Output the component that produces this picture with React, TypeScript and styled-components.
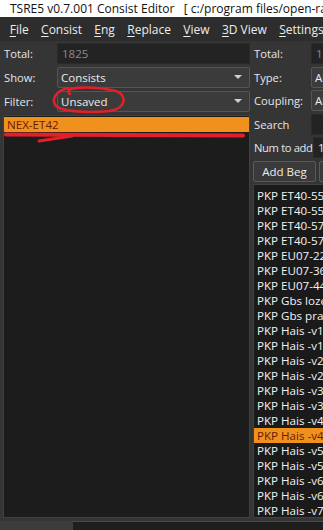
import React from 'react';
import styled, { createGlobalStyle } from 'styled-components';

const GlobalStyle = createGlobalStyle`
  html, body {
    margin: 0;
    padding: 0;
    background: #353535;
    overflow: hidden;
  }
  body {
    font-family: "Open Sans", "Noto Sans", sans-serif;
    font-size: 11.5px;
    color: #e6e6e6;
  }
`;

const Window = styled.div`
  position: relative;
  width: 323px;
  height: 530px;
  overflow: hidden;
  display: flex;
  flex-direction: column;
`;

const TitleBar = styled.div`
  height: 17px;
  background: #ffffff;
  display: flex;
  align-items: center;
  gap: 7px;
  padding-left: 3px;
  color: #111;
  font-size: 12px;
  white-space: pre;
  overflow: hidden;
`;

const MenuBar = styled.div`
  height: 24px;
  background: #2d2d2d;
  display: flex;
  align-items: center;
  padding-left: 3.5px;
  white-space: nowrap;
  font-size: 12px;
`;

const MenuItem = styled.span`
  padding: 0 6.2px;
  color: #ececec;
  u {
    text-decoration-thickness: 1px;
    text-underline-offset: 2px;
  }
`;

const Main = styled.div`
  flex: 1;
  display: flex;
  padding-top: 2px;
  min-height: 0;
`;

const LeftPanel = styled.div`
  width: 247px;
  margin-left: 3px;
  display: flex;
  flex-direction: column;
  gap: 3px;
  flex-shrink: 0;
`;

const RightPanel = styled.div`
  margin-left: 3px;
  width: 200px;
  flex-shrink: 0;
  display: flex;
  flex-direction: column;
  gap: 2.5px;
`;

const FieldRow = styled.div<{ $labelWidth: number }>`
  display: grid;
  grid-template-columns: ${p => p.$labelWidth}px 1fr;
  align-items: center;
  height: 21px;
`;

const Label = styled.span<{ $tight?: boolean }>`
  padding-left: 1px;
  font-size: 11.2px;
  letter-spacing: ${p => (p.$tight ? '-0.35px' : 'normal')};
  color: #e6e6e6;
  white-space: nowrap;
`;

const TextBox = styled.div<{ $muted?: boolean }>`
  height: 21px;
  box-sizing: border-box;
  background: #232323;
  border: 1px solid #2a2a2a;
  display: flex;
  align-items: center;
  padding-left: 4px;
  color: ${p => (p.$muted ? '#8a8a8a' : '#e6e6e6')};
`;

const Combo = styled.div`
  position: relative;
  height: 21px;
  box-sizing: border-box;
  background: #3b3b3b;
  border: 1px solid #555;
  border-radius: 2px;
  display: flex;
  align-items: center;
  padding-left: 3px;
  color: #ececec;
`;

const Arrow = styled.span`
  position: absolute;
  right: 7px;
  top: 7px;
  width: 0;
  height: 0;
  border-left: 4px solid transparent;
  border-right: 4px solid transparent;
  border-top: 4px solid #cfcfcf;
`;

const ListBox = styled.div`
  flex: 1;
  box-sizing: border-box;
  background: #1c1c1c;
  border: 1px solid #404040;
  padding: 1px 0;
  overflow: hidden;
  margin-bottom: 12px;
`;

const ListItem = styled.div<{ $selected?: boolean }>`
  height: 15px;
  line-height: 15px;
  padding-left: 3px;
  white-space: nowrap;
  font-size: 11.6px;
  background: ${p => (p.$selected ? '#f0911e' : 'transparent')};
  color: ${p => (p.$selected ? '#6a1a05' : '#f2f2f2')};
`;

const ButtonRow = styled.div`
  display: flex;
  gap: 3px;
  height: 21px;
`;

const Button = styled.div`
  width: 63px;
  flex-shrink: 0;
  box-sizing: border-box;
  background: #3a3a3a;
  border: 1px solid #5a5a5a;
  border-radius: 2px;
  display: flex;
  align-items: center;
  justify-content: center;
  color: #ececec;
`;

const RightList = styled(ListBox)`
  padding-top: 3px;
  background: #1a1a1a;
`;

const BottomStrip = styled.div`
  position: absolute;
  left: 0;
  bottom: 0;
  width: 323px;
  height: 9px;
  display: flex;
`;

const BottomTab = styled.div`
  width: 73px;
  background: #3c3c3c;
`;

const BottomDock = styled.div`
  flex: 1;
  background: #1e1e1e;
  border-top: 1px solid #4a4a4a;
`;

const Overlay = styled.svg`
  position: absolute;
  left: 0;
  top: 0;
  pointer-events: none;
`;

const AppIcon = () => (
  <svg width="13" height="12" viewBox="0 0 13 12">
    <rect x="0.5" y="0.5" width="12" height="11" fill="#d8dde0" stroke="#9aa3a8" />
    <rect x="1" y="1" width="12" height="2" fill="#7d8a90" />
    <rect x="2" y="4" width="4" height="6" fill="#4f8a8f" />
  </svg>
);

const rightItems = [
  'PKP ET40-55a', 'PKP ET40-55b', 'PKP ET40-57a', 'PKP ET40-57b',
  'PKP EU07-22', 'PKP EU07-36', 'PKP EU07-44', 'PKP Gbs lozenka',
  'PKP Gbs prazna', 'PKP Hais -v1a', 'PKP Hais -v1b', 'PKP Hais -v2a',
  'PKP Hais -v2b', 'PKP Hais -v3a', 'PKP Hais -v3b', 'PKP Hais -v4a',
  'PKP Hais -v4b', 'PKP Hais -v5a', 'PKP Hais -v5b', 'PKP Hais -v6a',
  'PKP Hais -v6b', 'PKP Hais -v7a',
];

const menus = ['File', 'Consist', 'Eng', 'Replace', 'View', '3D View', 'Settings'];

export default function App() {
  return (
    <>
      <GlobalStyle />
      <Window>
        <TitleBar>
          <AppIcon />
          <span>TSRE5 v0.7.001 Consist Editor   [ c:/program files/open-rails/routes ]</span>
        </TitleBar>
        <MenuBar>
          {menus.map(m => (
            <MenuItem key={m}>
              <u>{m[0]}</u>
              {m.slice(1)}
            </MenuItem>
          ))}
        </MenuBar>
        <Main>
          <LeftPanel>
            <FieldRow $labelWidth={54}>
              <Label>Total:</Label>
              <TextBox $muted>1825</TextBox>
            </FieldRow>
            <FieldRow $labelWidth={54}>
              <Label>Show:</Label>
              <Combo>Consists<Arrow /></Combo>
            </FieldRow>
            <FieldRow $labelWidth={54}>
              <Label>Filter:</Label>
              <Combo>Unsaved<Arrow /></Combo>
            </FieldRow>
            <ListBox>
              <ListItem $selected>NEX-ET42</ListItem>
            </ListBox>
          </LeftPanel>
          <RightPanel>
            <FieldRow $labelWidth={58}>
              <Label>Total:</Label>
              <TextBox $muted>1825</TextBox>
            </FieldRow>
            <FieldRow $labelWidth={58}>
              <Label>Type:</Label>
              <Combo>All<Arrow /></Combo>
            </FieldRow>
            <FieldRow $labelWidth={58}>
              <Label>Coupling:</Label>
              <Combo>All<Arrow /></Combo>
            </FieldRow>
            <FieldRow $labelWidth={58}>
              <Label>Search</Label>
              <TextBox />
            </FieldRow>
            <FieldRow $labelWidth={60}>
              <Label $tight>Num to add</Label>
              <TextBox>1</TextBox>
            </FieldRow>
            <ButtonRow>
              <Button>Add Beg</Button>
              <Button>Add End</Button>
            </ButtonRow>
            <RightList>
              {rightItems.map((t, i) => (
                <ListItem key={t} $selected={i === 16}>{t}</ListItem>
              ))}
            </RightList>
          </RightPanel>
        </Main>
        <BottomStrip>
          <BottomTab />
          <BottomDock />
        </BottomStrip>
        <Overlay width="323" height="530" viewBox="0 0 323 530">
          <path
            d="M70 94 C60 86, 95 86, 116 91 C127 95, 127 108, 110 111 C90 113, 62 112, 56 106 C51 100, 55 91, 68 88"
            fill="none"
            stroke="#e3202a"
            strokeWidth="2.6"
            strokeLinecap="round"
          />
          <path d="M6 134.5 L243 135.5" stroke="#e3202a" strokeWidth="4" strokeLinecap="round" />
          <path d="M39 141 L72 136" stroke="#e3202a" strokeWidth="3" strokeLinecap="round" />
        </Overlay>
      </Window>
    </>
  );
}
